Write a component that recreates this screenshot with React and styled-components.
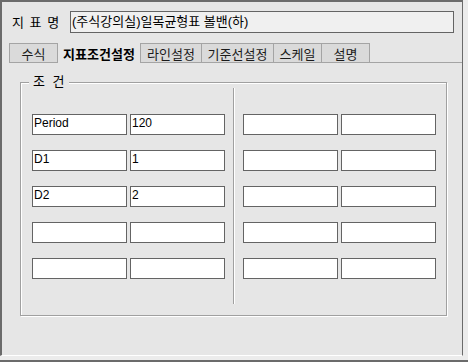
import React from "react";
import styled, { createGlobalStyle } from "styled-components";

const GlobalStyle = createGlobalStyle`
  html, body {
    margin: 0;
    padding: 0;
  }
  body {
    width: 468px;
    height: 362px;
    overflow: hidden;
    font-family: "Liberation Sans", "Noto Sans CJK KR", sans-serif;
    color: #000;
  }
`;

const Screen = styled.div`
  width: 468px;
  height: 362px;
  display: flex;
  flex-direction: column;
  background: #ececec;
`;

const Frame = styled.div`
  box-sizing: border-box;
  width: 463px;
  height: 356px;
  background: #e6e6e6;
  border-top: 2px solid #6b6b6b;
  border-left: 2px solid #6b6b6b;
  border-right: 1px solid #6b6b6b;
  border-bottom: 1px solid #ffffff;
  display: flex;
  flex-direction: column;
`;

const BottomEdge = styled.div`
  margin-top: 4px;
  height: 2px;
  background: #6b6b6b;
`;

const HeaderRow = styled.div`
  display: flex;
  align-items: center;
  margin-top: 9px;
  padding-left: 10px;
`;

const Label = styled.div`
  width: 58px;
  font-size: 13px;
  line-height: 15px;
  word-spacing: 2px;
`;

const TitleInput = styled.div`
  box-sizing: border-box;
  width: 384px;
  height: 22px;
  border: 1px solid #646464;
  background: #f0f0f0;
  padding-left: 1px;
  font-size: 13px;
  line-height: 19px;
  white-space: nowrap;
`;

const TabBar = styled.div`
  display: flex;
  align-items: flex-end;
  margin-top: 10px;
  margin-left: 7px;
  height: 20px;
`;

const Tab = styled.div`
  box-sizing: border-box;
  width: ${(p) => p.$w}px;
  height: 20px;
  margin-left: ${(p) => (p.$joined ? -1 : 0)}px;
  display: flex;
  align-items: center;
  justify-content: center;
  font-size: 13px;
  font-weight: ${(p) => (p.$active ? 700 : 400)};
  color: ${(p) => (p.$active ? "#000" : "#1a1a1a")};
  background: ${(p) => (p.$active ? "transparent" : "#dadada")};
  border: ${(p) => (p.$active ? "none" : "1px solid #a4a4a4")};
  white-space: nowrap;
`;

const TabFill = styled.div`
  flex: 1;
  height: 20px;
  box-sizing: border-box;
  border-bottom: 1px solid #a4a4a4;
`;

const GroupBox = styled.div`
  position: relative;
  box-sizing: border-box;
  width: 427px;
  height: 234px;
  margin-top: 19px;
  margin-left: 18px;
  border: 1px solid #a0a0a0;
  box-shadow: inset 1px 1px 0 #ffffff, 1px 1px 0 #ffffff;
`;

const Legend = styled.div`
  position: absolute;
  left: 8px;
  top: -9px;
  padding: 0 4px;
  background: #e6e6e6;
  font-size: 13px;
  line-height: 15px;
  word-spacing: 4px;
`;

const GroupInner = styled.div`
  box-sizing: border-box;
  height: 100%;
  display: flex;
  padding: 5px 0 11px 11px;
`;

const Fields = styled.div`
  display: grid;
  grid-template-columns: 95px 95px;
  column-gap: 3px;
  row-gap: 15px;
  align-content: start;
  margin-top: 26px;
  margin-left: ${(p) => p.$ml || 0}px;
  margin-right: ${(p) => p.$mr || 0}px;
`;

const Field = styled.div`
  box-sizing: border-box;
  height: 21px;
  border: 1px solid #646464;
  background: #ffffff;
  padding-left: 1px;
  font-size: 12px;
  line-height: 16px;
  white-space: nowrap;
`;

const Divider = styled.div`
  width: 0;
  border-left: 1px solid #a0a0a0;
  border-right: 1px solid #ffffff;
`;

const tabs = [
  { label: "수식", w: 49 },
  { label: "지표조건설정", w: 82, active: true },
  { label: "라인설정", w: 62 },
  { label: "기준선설정", w: 73, joined: true },
  { label: "스케일", w: 49, joined: true },
  { label: "설명", w: 49, joined: true },
];

const leftRows = [
  ["Period", "120"],
  ["D1", "1"],
  ["D2", "2"],
  ["", ""],
  ["", ""],
];

const rightRows = [
  ["", ""],
  ["", ""],
  ["", ""],
  ["", ""],
  ["", ""],
];

export default function App() {
  return (
    <>
      <GlobalStyle />
      <Screen>
        <Frame>
          <HeaderRow>
            <Label>지 표 명</Label>
            <TitleInput>(주식강의실)일목균형표 볼밴(하)</TitleInput>
          </HeaderRow>
          <TabBar>
            {tabs.map((t) => (
              <Tab key={t.label} $w={t.w} $active={t.active} $joined={t.joined}>
                {t.label}
              </Tab>
            ))}
            <TabFill />
          </TabBar>
          <GroupBox>
            <Legend>조 건</Legend>
            <GroupInner>
              <Fields $mr={8}>
                {leftRows.flat().map((v, i) => (
                  <Field key={i}>{v}</Field>
                ))}
              </Fields>
              <Divider />
              <Fields $ml={8}>
                {rightRows.flat().map((v, i) => (
                  <Field key={i}>{v}</Field>
                ))}
              </Fields>
            </GroupInner>
          </GroupBox>
        </Frame>
        <BottomEdge />
      </Screen>
    </>
  );
}
